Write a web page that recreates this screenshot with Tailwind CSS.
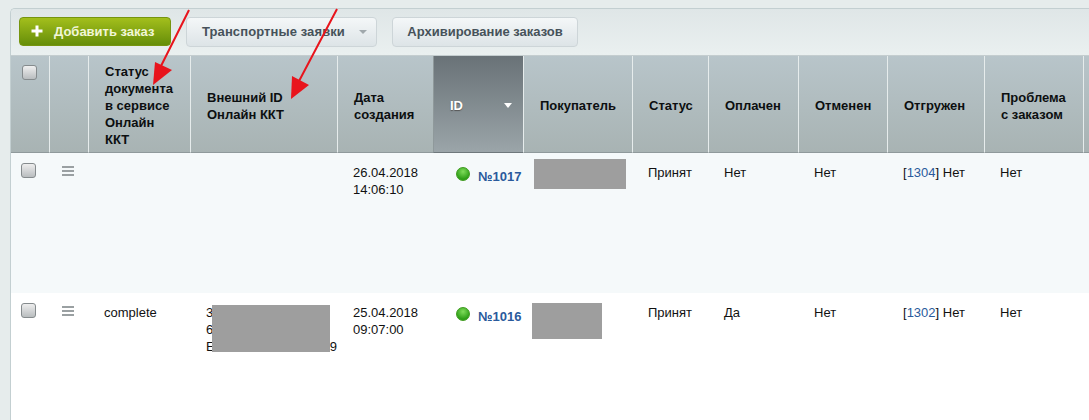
<!DOCTYPE html>
<html lang="ru">
<head>
  <meta charset="UTF-8">
  <title>Заказы</title>
  <script src="https://cdn.jsdelivr.net/npm/@tailwindcss/browser@4"></script>
</head>
<body class="relative h-[420px] overflow-hidden bg-[#e6ecec] font-['Liberation_Sans',Arial,sans-serif] text-[13px] leading-[17px] text-[#111]">

<div class="ml-[10px] mt-[8px] w-[1079px] border-l border-t border-[#c3cfd1] rounded-tl-[5px] overflow-hidden">
  <!-- Toolbar -->
  <div class="flex items-start h-[47px] pt-[8px] pl-[8px] gap-[15px] bg-gradient-to-b from-[#dfe6e7] to-[#eaf0f0] border-b border-[#c4cdcf]">
    <button class="flex items-center w-[152px] h-[29px] pl-[11px] pb-[1px] gap-[11px] rounded-[4px] border border-[#76950f] bg-gradient-to-b from-[#a3bf1c] to-[#668e09] font-bold text-[#f1f6d8]">
      <svg width="12" height="12" viewBox="0 0 12 12"><path d="M4.500 0.500h3v4h4v3h-4v4h-3v-4h-4v-3h4z" fill="#fff"/></svg>
      <span>Добавить заказ</span>
    </button>
    <button class="flex items-center w-[191px] h-[30px] pl-[15px] pb-[1px] gap-[14px] rounded-[4px] border border-[#cdd5d8] bg-gradient-to-b from-[#f4f7f8] to-[#dde4e7] font-bold tracking-[0.1px] text-[#46525a]">
      <span>Транспортные заявки</span>
      <span class="w-0 h-0 border-x-[4px] border-x-transparent border-t-[4px] border-t-[#a0a8ac]"></span>
    </button>
    <button class="w-[186px] h-[30px] pb-[1px] rounded-[4px] border border-[#cdd5d8] bg-gradient-to-b from-[#f4f7f8] to-[#dde4e7] font-bold text-[#46525a]">Архивирование заказов</button>
  </div>

  <!-- Orders -->
  <table class="table-fixed w-[1078px] border-separate border-spacing-0">
    <colgroup>
      <col class="w-[38px]"><col class="w-[39px]"><col class="w-[102px]"><col class="w-[147px]"><col class="w-[96px]"><col class="w-[90px]"><col class="w-[109px]"><col class="w-[76px]"><col class="w-[90px]"><col class="w-[89px]"><col class="w-[97px]"><col class="w-[99px]"><col class="w-[6px]">
    </colgroup>
    <thead>
      <tr class="h-[97px] bg-gradient-to-b from-[#b8c5ca] to-[#a8b3b3] text-left font-bold text-[#0c0f10]">
        <th class="align-top pt-[9px] pl-[11px] border-b border-[#8f999b]"><span class="block w-[15px] h-[15px] rounded-[3px] border border-[#858b8d] bg-gradient-to-b from-[#f0f0f0] to-[#b9bdbf]"></span></th>
        <th class="border-l border-[#e6ecec] border-b-[#8f999b] border-b"></th>
        <th class="pl-[16px] pt-[2px] border-l border-[#e6ecec] border-b-[#8f999b] border-b">Статус<br>документа<br>в сервисе<br>Онлайн<br>ККТ</th>
        <th class="pl-[16px] pt-[4px] border-l border-[#e6ecec] border-b-[#8f999b] border-b">Внешний ID<br>Онлайн ККТ</th>
        <th class="pl-[16px] pt-[4px] border-l border-[#e6ecec] border-b-[#8f999b] border-b">Дата<br>создания</th>
        <th class="pl-[16px] pt-[2px] border-l border-[#8f999b] border-b border-b-[#6f787c] bg-gradient-to-b from-[#697277] to-[#9ba5a9] text-white [text-shadow:0_1px_1px_#555]">
          <div class="flex items-center justify-between pr-[11px]">
            <span>ID</span>
            <span class="w-0 h-0 border-x-[4px] border-x-transparent border-t-[5px] border-t-white"></span>
          </div>
        </th>
        <th class="pl-[16px] pt-[2px] border-l border-[#e6ecec] border-b-[#8f999b] border-b">Покупатель</th>
        <th class="pl-[16px] pt-[2px] border-l border-[#e6ecec] border-b-[#8f999b] border-b">Статус</th>
        <th class="pl-[16px] pt-[2px] border-l border-[#e6ecec] border-b-[#8f999b] border-b">Оплачен</th>
        <th class="pl-[16px] pt-[2px] border-l border-[#e6ecec] border-b-[#8f999b] border-b">Отменен</th>
        <th class="pl-[16px] pt-[2px] border-l border-[#e6ecec] border-b-[#8f999b] border-b">Отгружен</th>
        <th class="pl-[16px] pt-[4px] border-l border-[#e6ecec] border-b-[#8f999b] border-b">Проблема<br>с заказом</th>
        <th class="border-l border-[#e6ecec] border-b-[#8f999b] border-b"></th>
      </tr>
    </thead>
    <tbody>
      <tr class="h-[140px] bg-[#f5f9fa] align-top">
        <td class="pt-[10px] pl-[10px]"><span class="block w-[15px] h-[15px] rounded-[3px] border border-[#858b8d] bg-gradient-to-b from-[#eeeeee] to-[#b9bdbf]"></span></td>
        <td class="pt-[13px] pl-[13px]">
          <div class="flex flex-col gap-[2px] w-[12px]"><i class="h-[2px] bg-[#9aa0a2]"></i><i class="h-[2px] bg-[#9aa0a2]"></i><i class="h-[2px] bg-[#9aa0a2]"></i></div>
        </td>
        <td class="pt-[11px] pl-[16px]"></td>
        <td class="pt-[11px] pl-[16px]"></td>
        <td class="pt-[11px] pl-[16px]">26.04.2018<br>14:06:10</td>
        <td class="pt-[14px] pl-[23px]">
          <div class="flex items-start gap-[8px]">
            <span class="w-[14px] h-[14px] rounded-full border border-[#3c9a1c] bg-[radial-gradient(circle_at_50%_30%,#7fdc5a,#2fa018_70%)]"></span>
            <a class="mt-[1px] font-bold text-[#2a5a9c]">№1017</a>
          </div>
        </td>
        <td class="pt-[6px] pl-[11px]"><div class="w-[92px] h-[30px] bg-[#9e9e9e]"></div></td>
        <td class="pt-[11px] pl-[16px]">Принят</td>
        <td class="pt-[11px] pl-[16px]">Нет</td>
        <td class="pt-[11px] pl-[16px]">Нет</td>
        <td class="pt-[11px] pl-[16px]">[<a class="text-[#2a5a9c]">1304</a>] Нет</td>
        <td class="pt-[11px] pl-[16px]">Нет</td>
        <td></td>
      </tr>
      <tr class="h-[140px] bg-white align-top">
        <td class="pt-[10px] pl-[10px]"><span class="block w-[15px] h-[15px] rounded-[3px] border border-[#858b8d] bg-gradient-to-b from-[#eeeeee] to-[#b9bdbf]"></span></td>
        <td class="pt-[13px] pl-[13px]">
          <div class="flex flex-col gap-[2px] w-[12px]"><i class="h-[2px] bg-[#9aa0a2]"></i><i class="h-[2px] bg-[#9aa0a2]"></i><i class="h-[2px] bg-[#9aa0a2]"></i></div>
        </td>
        <td class="pt-[11px] pl-[16px]">complete</td>
        <td class="relative pt-[11px] pl-[16px]">
          <div>3</div><div>6</div>
          <div class="flex justify-between"><span>Е</span><span>9</span></div>
          <div class="absolute left-[22px] top-[12px] w-[118px] h-[47px] bg-[#9e9e9e]"></div>
        </td>
        <td class="pt-[11px] pl-[16px]">25.04.2018<br>09:07:00</td>
        <td class="pt-[14px] pl-[23px]">
          <div class="flex items-start gap-[8px]">
            <span class="w-[14px] h-[14px] rounded-full border border-[#3c9a1c] bg-[radial-gradient(circle_at_50%_30%,#7fdc5a,#2fa018_70%)]"></span>
            <a class="mt-[1px] font-bold text-[#2a5a9c]">№1016</a>
          </div>
        </td>
        <td class="pt-[10px] pl-[9px]"><div class="w-[70px] h-[36px] bg-[#9e9e9e]"></div></td>
        <td class="pt-[11px] pl-[16px]">Принят</td>
        <td class="pt-[11px] pl-[16px]">Да</td>
        <td class="pt-[11px] pl-[16px]">Нет</td>
        <td class="pt-[11px] pl-[16px]">[<a class="text-[#2a5a9c]">1302</a>] Нет</td>
        <td class="pt-[11px] pl-[16px]">Нет</td>
        <td></td>
      </tr>
    </tbody>
  </table>
</div>

<!-- Red annotation arrows -->
<svg class="absolute left-0 top-0 pointer-events-none" width="1089" height="420" viewBox="0 0 1089 420">
  <path d="M189 10L160 68M337 9L298 83" stroke="#e8141c" stroke-width="2" fill="none"/>
  <path d="M153 85L155 62L172 70z" fill="#e8141c"/>
  <path d="M291 99L292 76L309 85z" fill="#e8141c"/>
</svg>

</body>
</html>
